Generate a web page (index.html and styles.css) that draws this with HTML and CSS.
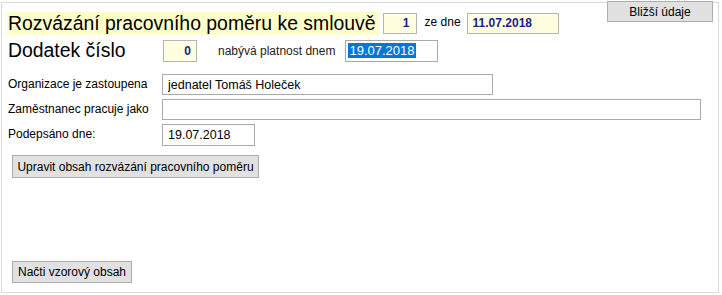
FILE: index.html
```html
<!DOCTYPE html>
<html lang="cs">
<head>
  <meta charset="UTF-8">
  <meta name="viewport" content="width=device-width, initial-scale=1.0">
  <title>Rozvázání pracovního poměru</title>
  <link rel="stylesheet" href="styles.css">
</head>
<body>

  <div class="frame">
    <!-- Button over the top border -->
    <button class="btn btn-detail">Bližší údaje</button>

    <!-- Heading row: contract number and date -->
    <div class="head-row">
      <span class="title">Rozvázání pracovního poměru ke smlouvě</span>
      <span class="box box-num">1</span>
      <span class="small-label">ze dne</span>
      <span class="box box-date">11.07.2018</span>
    </div>

    <!-- Amendment row -->
    <div class="head-row second">
      <span class="subtitle">Dodatek číslo</span>
      <span class="box box-num">0</span>
      <span class="small-label valid">nabývá platnost dnem</span>
      <span class="field field-date"><span class="selected">19.07.2018</span></span>
    </div>

    <!-- Form fields -->
    <div class="fields">
      <label>Organizace je zastoupena</label>
      <input type="text" class="input input-org" value="jednatel Tomáš Holeček">

      <label>Zaměstnanec pracuje jako</label>
      <input type="text" class="input input-wide" value="">

      <label>Podepsáno dne:</label>
      <input type="text" class="input input-date" value="19.07.2018">
    </div>

    <button class="btn btn-edit">Upravit obsah rozvázání pracovního poměru</button>

    <button class="btn btn-load">Načti vzorový obsah</button>
  </div>

</body>
</html>
```

FILE: styles.css
```css
/* Base page */
body {
  margin: 0;
  font-family: "Liberation Sans", Arial, sans-serif;
  font-size: 12px;
  color: #000;
  background-color: #fff;
}

/* Outer frame around the whole form */
.frame {
  position: relative;
  display: flex;
  flex-direction: column;
  box-sizing: border-box;
  height: 291px;
  margin: 2px 3px 0 1px;
  padding: 9px 5px 9px 5px;
  border: 1px solid #dadada;
}

/* Heading rows */
.head-row {
  display: flex;
  align-items: center;
  height: 23px;
}

.head-row.second {
  margin-top: 4px;
}

.title {
  font-size: 19.4px;
  line-height: 23px;
  background-color: #ffffcc;
  padding: 0 4px 0 1px;
}

.subtitle {
  font-size: 19.4px;
  line-height: 23px;
  width: 155px;
  padding-left: 1px;
}

/* Small read-only boxes */
.box {
  box-sizing: border-box;
  height: 21px;
  line-height: 19px;
  border: 1px solid #b4b4b4;
  background-color: #ffffe0;
  color: #1c1c8c;
  font-weight: bold;
}

.box-num {
  width: 34px;
  margin-left: 3px;
  padding-right: 6px;
  text-align: right;
}

.second .box-num {
  height: 22px;
  line-height: 20px;
  margin-left: 0;
  padding-right: 5px;
}

.box-date {
  width: 92px;
  padding-left: 5px;
}

.small-label {
  margin: 0 6px 0 8px;
  padding-bottom: 3px;
}

.small-label.valid {
  margin: 0 10px 0 21px;
  padding-bottom: 0;
  color: #222;
}

/* Date field with selected text */
.field {
  box-sizing: border-box;
  height: 22px;
  border: 1px solid #aaa;
  padding: 1px 2px;
}

.field-date {
  width: 93px;
  font-size: 13px;
  line-height: 18px;
}

.selected {
  background-color: #0078d7;
  color: #fff;
  padding: 0 1px;
}

/* Grid with labels and inputs */
.fields {
  display: grid;
  grid-template-columns: 155px auto;
  row-gap: 4px;
  margin-top: 12px;
  align-items: center;
}

.fields label {
  padding-left: 1px;
  padding-bottom: 2px;
}

.input {
  box-sizing: border-box;
  height: 21px;
  margin: 0;
  padding: 0 5px;
  border: 1px solid #aaa;
  font-family: inherit;
  font-size: 12.5px;
  color: #000;
  outline: none;
}

.input-org {
  width: 331px;
}

.input-wide {
  width: 539px;
}

.input-date {
  width: 93px;
  height: 22px;
}

/* Buttons */
.btn {
  box-sizing: border-box;
  height: 23px;
  padding: 0 4px;
  border: 1px solid #adadad;
  background-color: #e1e1e1;
  font-family: inherit;
  font-size: 12px;
  color: #000;
}

.btn-detail {
  position: absolute;
  top: -2px;
  right: 5px;
  width: 106px;
  height: 21px;
}

.btn-edit {
  align-self: flex-start;
  width: 247px;
  margin: 9px 0 0 5px;
}

.btn-load {
  align-self: flex-start;
  width: 120px;
  height: 22px;
  margin: auto 0 0 5px;
}
```
